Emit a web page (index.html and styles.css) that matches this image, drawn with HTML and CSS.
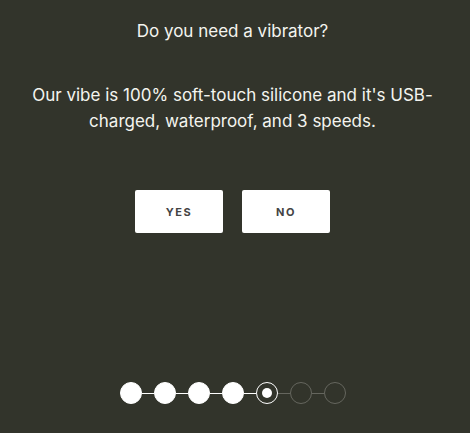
FILE: index.html
```html
<!DOCTYPE html>
<html lang="en">
<head>
    <meta charset="UTF-8">
    <meta name="viewport" content="width=device-width, initial-scale=1.0">
    <title>Quiz</title>
    <link rel="stylesheet" href="styles.css">
</head>
<body>
    <div class="quiz">
        <h2 class="question">Do you need a vibrator?</h2>
        <p class="details">Our vibe is 100% soft-touch silicone and it's USB-charged, waterproof, and 3 speeds.</p>
        <div class="answers">
            <button class="answer">YES</button>
            <button class="answer">NO</button>
        </div>
        <div class="progress">
            <span class="step done"></span>
            <span class="line done"></span>
            <span class="step done"></span>
            <span class="line done"></span>
            <span class="step done"></span>
            <span class="line done"></span>
            <span class="step done"></span>
            <span class="line done"></span>
            <span class="step current"></span>
            <span class="line"></span>
            <span class="step"></span>
            <span class="line"></span>
            <span class="step"></span>
        </div>
    </div>
</body>
</html>
```

FILE: styles.css
```css
html, body {
    height: 100%;
}
body {
    margin: 0;
    background-color: #32342b;
    color: #f4f4ef;
    font-family: Inter, "Liberation Sans", sans-serif;
    text-align: center;
}
.quiz {
    padding: 20px 20px 0 15px;
}
.question {
    font-size: 17px;
    font-weight: 400;
    line-height: 22px;
    margin: 0 0 40px;
}
.details {
    font-size: 17px;
    line-height: 26px;
    margin: 0 auto;
    max-width: 410px;
}
.answers {
    display: flex;
    justify-content: center;
    gap: 19px;
    margin-top: 56px;
}
.answer {
    width: 88px;
    height: 43px;
    background-color: #fff;
    border: none;
    border-radius: 2px;
    color: #444;
    font-family: Inter, "Liberation Sans", sans-serif;
    font-size: 11px;
    font-weight: 700;
    letter-spacing: 1.6px;
    cursor: pointer;
}
.progress {
    display: flex;
    justify-content: center;
    align-items: center;
    margin-top: 149px;
}
.step {
    box-sizing: border-box;
    width: 22px;
    height: 22px;
    border-radius: 50%;
    border: 1.5px solid #65665e;
}
.step.done {
    background-color: #fff;
    border-color: #fff;
}
.step.current {
    border-color: #fff;
    display: flex;
    align-items: center;
    justify-content: center;
}
.step.current::after {
    content: "";
    width: 10px;
    height: 10px;
    border-radius: 50%;
    background-color: #fff;
}
.line {
    width: 12px;
    height: 1px;
    background-color: #65665e;
}
.line.done {
    background-color: #fff;
}
```
